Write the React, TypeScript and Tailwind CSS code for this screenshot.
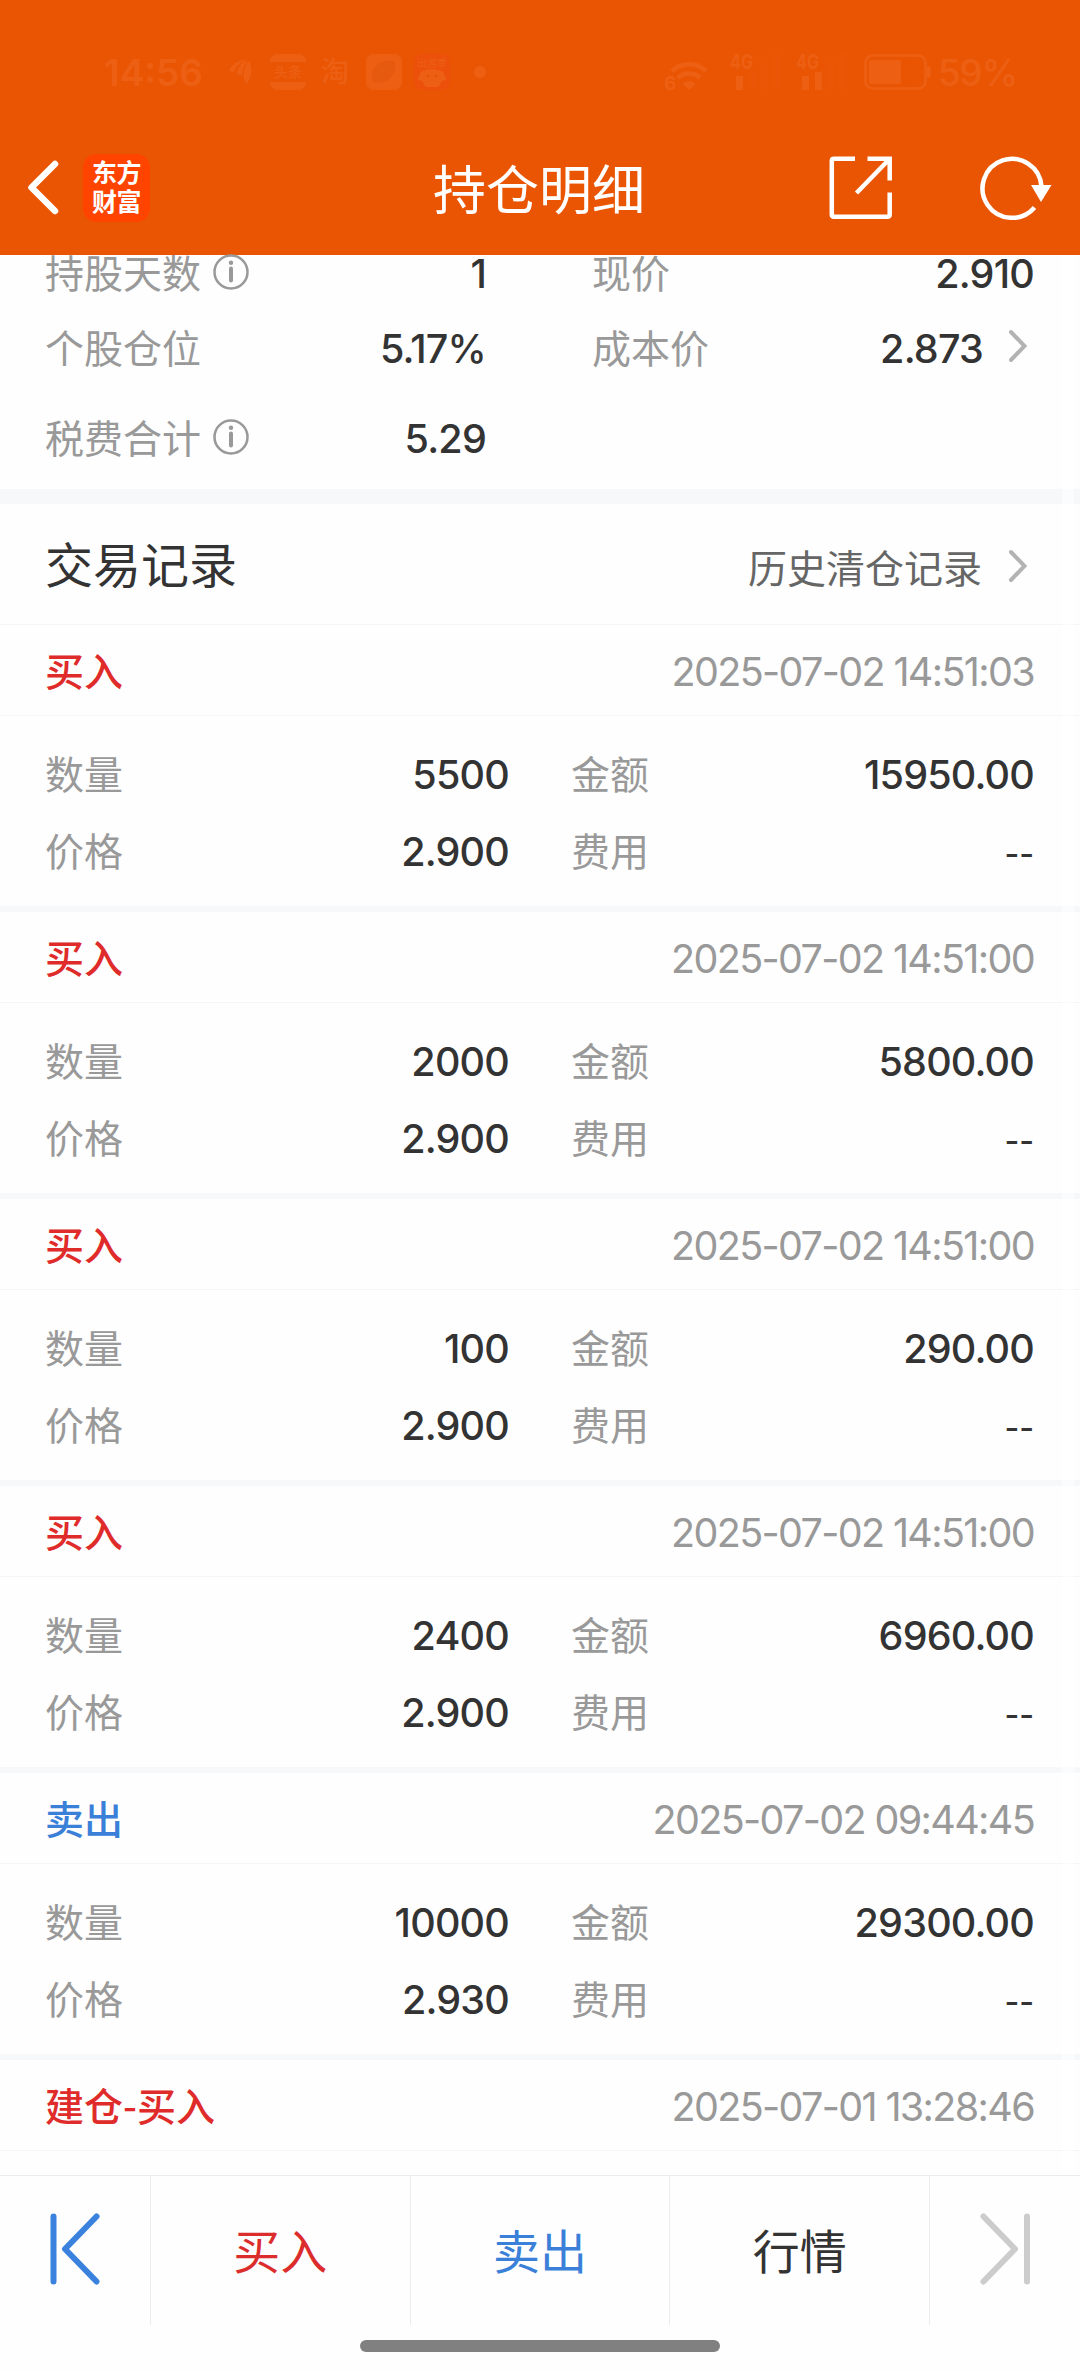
import type { ReactNode } from "react";
import clsx from "clsx";

type Trade = {
  label: string;
  side: "buy" | "sell";
  time: string;
  qty?: string;
  amount?: string;
  price?: string;
};

const trades: Trade[] = [
  { label: "买入", side: "buy", time: "2025-07-02 14:51:03", qty: "5500", amount: "15950.00", price: "2.900" },
  { label: "买入", side: "buy", time: "2025-07-02 14:51:00", qty: "2000", amount: "5800.00", price: "2.900" },
  { label: "买入", side: "buy", time: "2025-07-02 14:51:00", qty: "100", amount: "290.00", price: "2.900" },
  { label: "买入", side: "buy", time: "2025-07-02 14:51:00", qty: "2400", amount: "6960.00", price: "2.900" },
  { label: "卖出", side: "sell", time: "2025-07-02 09:44:45", qty: "10000", amount: "29300.00", price: "2.930" },
  { label: "建仓-买入", side: "buy", time: "2025-07-01 13:28:46" },
];

function SignalBars({ level }: { level: number }) {
  const bars = [
    { x: 6, h: 14 },
    { x: 19, h: 18 },
    { x: 30, h: 28 },
    { x: 43, h: 37 },
  ];
  return (
    <svg className="overflow-visible" width="52" height="38" viewBox="0 0 52 38" fill="currentColor">
      <text x="0" y="16" fontSize="20" fontWeight="700" textLength="23" lengthAdjust="spacingAndGlyphs">4G</text>
      {bars.map((b, i) => (
        <rect key={b.x} x={b.x} y={37 - b.h} width="7" height={b.h} opacity={i < level ? 1 : 0.15} />
      ))}
    </svg>
  );
}

function StatusBar() {
  return (
    <div className="flex h-[144px] items-center justify-between pl-[104px] pr-[63px] text-[#ed6014]">
      <div className="flex items-center">
        <span className="w-[124px] text-[37px] font-semibold leading-none">14:56</span>
        <svg width="24" height="26" viewBox="0 0 24 26" fill="currentColor">
          <path d="M1 13C3 6 9 1 18 1 12 3 7 8 6 13 4 12 2 12 1 13z" />
          <path d="M9 15C9 8 14 3 20 1c-4 5-6 10-6 16-1-1-3-2-5-2z" />
          <path d="M16 20c-1-8 1-14 5-18 4 8 3 17-3 23z" />
        </svg>
        <span className="ml-[18px] flex h-[36px] w-[36px] items-center justify-center rounded-[8px] border-y-[8px] border-current text-[14px] font-medium leading-none">头条</span>
        <span className="ml-[15px] text-[28px] font-medium leading-none">淘</span>
        <span className="ml-[17px] flex h-[36px] w-[36px] items-center justify-center rounded-[8px] bg-[#ed6014]">
          <svg width="28" height="28" viewBox="0 0 28 28" fill="#e55a0e">
            <path d="M3 24C-2 12 8 1 24 3c5 8-3 25-21 21z" />
          </svg>
        </span>
        <span className="ml-[12px] flex h-[36px] w-[36px] flex-col items-center rounded-[8px] bg-[#ec500a] pt-[3px] text-[10px] leading-[12px]">
          出游季
          <svg width="30" height="20" viewBox="0 0 30 20" fill="currentColor">
            <path d="M3 4c5-5 19-5 24 0l2 7-5 1c0 5-4 6-4 6H10s-4-1-4-6l-5-1z" />
            <circle cx="11" cy="7" r="1.5" fill="#ea5504" />
            <circle cx="19" cy="7" r="1.5" fill="#ea5504" />
          </svg>
        </span>
        <span className="ml-[24px] h-[12px] w-[12px] rounded-full bg-current" />
      </div>
      <div className="flex items-center">
        <svg className="overflow-visible" width="52" height="38" viewBox="0 0 52 38" fill="none" stroke="currentColor" strokeWidth="4.5">
          <path d="M8 18a25 25 0 0 1 34 0M14 25a16 16 0 0 1 22 0" />
          <path d="M19 31a8 8 0 0 1 12 0l-6 6z" fill="currentColor" stroke="none" />
          <text x="0" y="37" fontSize="19" fontWeight="700" fill="currentColor" stroke="none">6</text>
        </svg>
        <span className="ml-[14px]"><SignalBars level={1} /></span>
        <span className="ml-[14px]"><SignalBars level={2} /></span>
        <svg className="ml-[16px]" width="68" height="36" viewBox="0 0 68 36" fill="none">
          <rect x="1.5" y="1.5" width="60" height="33" rx="7" stroke="currentColor" strokeWidth="2.5" />
          <rect x="5" y="6" width="32" height="24" rx="3" fill="currentColor" />
          <path d="M63 12h2q2 1 2 6t-2 6h-2z" fill="currentColor" />
        </svg>
        <span className="ml-[6px] text-[37px] font-medium leading-none tracking-[-1.2px]">59%</span>
      </div>
    </div>
  );
}

function Header() {
  return (
    <header className="h-[255px] shrink-0 bg-[#ea5504] text-white">
      <StatusBar />
      <div className="flex h-[87px] items-center pl-[27px] pr-[27px]">
        <svg width="32" height="55" viewBox="0 0 32 55" fill="none" stroke="currentColor" strokeWidth="6.5" strokeLinecap="round" strokeLinejoin="round">
          <path d="M28 4 4.500 27.500 28 51" />
        </svg>
        <div className="ml-[24px] flex h-[68px] w-[67px] flex-col items-center justify-center rounded-[14px] bg-[#ff4400] text-[25px] font-bold leading-[29px] tracking-[-0.5px]">
          <span>东方</span>
          <span>财富</span>
        </div>
        <h1 className="ml-[283px] w-[216px] whitespace-nowrap pt-[8px] text-[53px] leading-none">持仓明细</h1>
        <svg className="ml-auto" width="64" height="64" viewBox="0 0 64 64" fill="none" stroke="currentColor" strokeWidth="4.5">
          <path d="M26 2.800H5Q2.800 2.800 2.800 5V58.500Q2.800 60.700 5 60.700H58.500Q60.700 60.700 60.700 58.500V36.500" />
          <path d="M38.500 2.800H60.700V24.500M60 3.500 27.500 37" />
        </svg>
        <svg className="ml-[87px]" width="73" height="66" viewBox="0 0 73 66" fill="none">
          <path d="M61.500 31.500A29.500 29.500 0 1 0 54.500 52.500" stroke="currentColor" strokeWidth="4.500" />
          <path d="M51 30h20.500L61 47z" fill="currentColor" />
        </svg>
      </div>
    </header>
  );
}

function InfoIcon() {
  return (
    <svg className="mb-[4px] ml-[12px]" width="36" height="36" viewBox="0 0 36 36" fill="none">
      <circle cx="18" cy="18" r="16.500" stroke="#999" strokeWidth="2.500" />
      <circle cx="18" cy="8.800" r="2.200" fill="#999" />
      <path d="M18 14.500v12" stroke="#999" strokeWidth="4" strokeLinecap="round" />
    </svg>
  );
}

function Chevron({ className }: { className?: string }) {
  return (
    <svg className={className} width="20" height="34" viewBox="0 0 20 34" fill="none" stroke="#b3b3b3" strokeWidth="4" strokeLinecap="round">
      <path d="M3 3 16.500 17 3 31" />
    </svg>
  );
}

function Label({ children }: { children: ReactNode }) {
  return <span className="whitespace-nowrap text-[39px] leading-none text-[#999]">{children}</span>;
}

function Value({ children }: { children: ReactNode }) {
  return (
    <span className={clsx("ml-auto font-medium leading-none text-[#333]", children === "--" ? "pt-[4px] text-[32px]" : "pt-[2px] text-[39.5px] tracking-[-0.8px]")}>
      {children}
    </span>
  );
}

function Summary() {
  return (
    <section className="h-[234px] shrink-0 text-[39px]">
      <div className="flex h-[37px] items-center pl-[45px] pr-[46px]">
        <div className="flex w-[441px] items-center"><Label>持股天数</Label><InfoIcon /><Value>1</Value></div>
        <div className="ml-[106px] flex flex-1 items-center"><Label>现价</Label><Value>2.910</Value></div>
      </div>
      <div className="flex h-[113px] items-center pl-[45px] pr-[52px]">
        <div className="flex w-[441px] items-center"><Label>个股仓位</Label><Value>5.17%</Value></div>
        <div className="ml-[106px] flex flex-1 items-center gap-[25px]"><Label>成本价</Label><Value>2.873</Value><Chevron className="mb-[5px]" /></div>
      </div>
      <div className="flex h-[67px] items-center pl-[45px]">
        <div className="flex w-[441px] items-center"><Label>税费合计</Label><InfoIcon /><Value>5.29</Value></div>
      </div>
    </section>
  );
}

function TradeItem({ trade }: { trade: Trade }) {
  return (
    <li>
      <div className="flex h-[91px] items-center justify-between border-b border-[#f5f5f6] pl-[45px] pr-[46px] pt-[3px]">
        <span className={clsx("pb-[4px] font-['Noto_Sans_CJK_SC',sans-serif] text-[39px] font-medium leading-none", trade.side === "buy" ? "text-[#e02b2b]" : "text-[#3a80d8]")}>{trade.label}</span>
        <span className="pt-[2px] text-[39.5px] leading-none tracking-[-1.65px] text-[#999]">{trade.time}</span>
      </div>
      {trade.qty && (
        <div className="h-[196px] border-b-[6px] border-[#f7f8fa] pt-[20px]">
          <div className="flex h-[77px] items-center pl-[45px] pr-[46px]">
            <div className="flex w-[464px] items-center"><Label>数量</Label><Value>{trade.qty}</Value></div>
            <div className="ml-[62px] flex flex-1 items-center"><Label>金额</Label><Value>{trade.amount}</Value></div>
          </div>
          <div className="flex h-[77px] items-center pl-[45px] pr-[46px]">
            <div className="flex w-[464px] items-center"><Label>价格</Label><Value>{trade.price}</Value></div>
            <div className="ml-[62px] flex flex-1 items-center"><Label>费用</Label><Value>--</Value></div>
          </div>
        </div>
      )}
    </li>
  );
}

function BottomBar() {
  return (
    <footer className="h-[198px] shrink-0 border-t border-[#ececec] bg-[#fefefe]">
      <nav className="flex h-[149px] text-[47px] leading-none">
        <button className="flex w-[151px] items-center justify-center border-r border-[#ececec] pb-[4px]">
          <svg width="52" height="72" viewBox="0 0 52 72" fill="none" stroke="#3a82dd" strokeWidth="6" strokeLinecap="round" strokeLinejoin="round">
            <path d="M4.500 3.500v65M47.500 3.500 16 36 47.500 68.500" />
          </svg>
        </button>
        <button className="flex-1 border-r border-[#ececec] pt-[2px] text-[#dc2d2d]">买入</button>
        <button className="flex-1 border-r border-[#ececec] pt-[2px] text-[#3a80d8]">卖出</button>
        <button className="flex-1 border-r border-[#ececec] pt-[2px] text-[#333]">行情</button>
        <button className="flex w-[150px] items-center justify-center pb-[4px]">
          <svg width="52" height="72" viewBox="0 0 52 72" fill="none" stroke="#ccc" strokeWidth="6" strokeLinecap="round" strokeLinejoin="round">
            <path d="M48 3.500v65M4.500 3.500 36 36 4.500 68.500" />
          </svg>
        </button>
      </nav>
      <div className="mx-auto mt-[15px] h-[12px] w-[360px] rounded-full bg-[#808080]" />
    </footer>
  );
}

export default function App() {
  return (
    <div className="flex h-[2373px] w-[1080px] flex-col overflow-hidden bg-[#fefefe] font-['Inter','Noto_Sans_CJK_SC',sans-serif]">
      <Header />
      <main className="relative flex h-[1920px] shrink-0 flex-col">
        <Summary />
        <div className="h-[15px] shrink-0 bg-[#f7f8fa]" />
        <div className="flex h-[121px] shrink-0 items-center border-b border-[#f5f5f6] pl-[45px] pr-[52px]">
          <h2 className="pt-[3px] text-[48px] leading-none text-[#333]">交易记录</h2>
          <span className="ml-auto mr-[26px] pt-[8px] text-[39px] leading-none text-[#666]">历史清仓记录</span>
          <Chevron className="mt-[3px]" />
        </div>
        <ul>
          {trades.map((t, i) => (
            <TradeItem key={i} trade={t} />
          ))}
        </ul>
        {/* faded scroll thumb */}
        <div className="absolute right-[6px] top-0 h-full w-[12px] bg-white/50" />
      </main>
      <BottomBar />
    </div>
  );
}
